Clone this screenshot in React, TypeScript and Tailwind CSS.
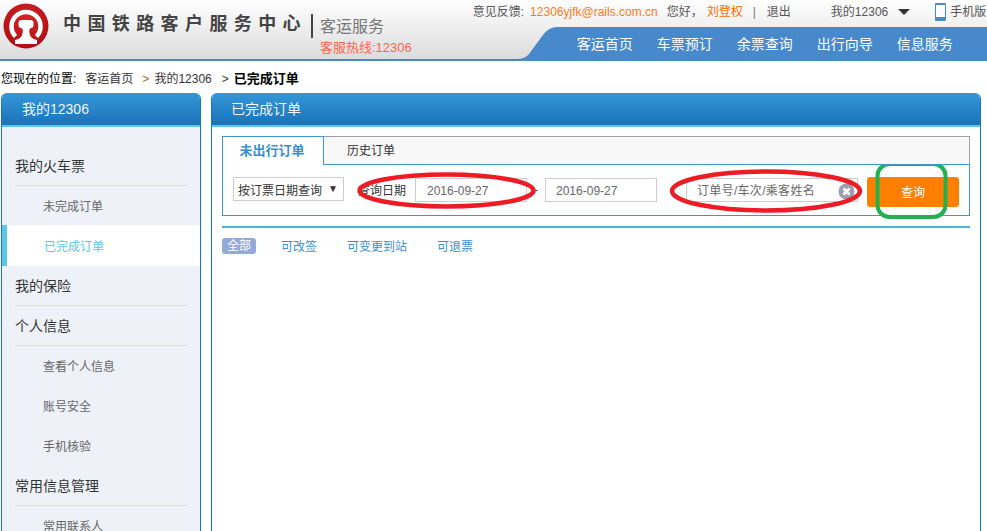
const FONT = "[font-family:'Liberation_Sans','Noto_Sans_CJK_SC',sans-serif]";

function Logo() {
  return (
    <svg width="46" height="46" viewBox="0 0 46 46" className="mt-[3px] ml-[3px] shrink-0">
      <defs>
        <radialGradient id="lg" cx="50%" cy="35%" r="70%">
          <stop offset="0%" stopColor="#d9252b" />
          <stop offset="100%" stopColor="#a80d12" />
        </radialGradient>
      </defs>
      <circle cx="23" cy="23" r="22.5" fill="url(#lg)" />
      <path d="M12.5 33.5 A14.5 14.5 0 1 1 33.5 33.5" fill="none" stroke="#fff" strokeWidth="4.5" />
      <path d="M15.5 20 Q15.5 17 18.5 17 H27.5 Q30.5 17 30.5 20 V22.5 Q30.5 24.5 28 25 Q26 25.5 26.2 28 Q26.5 33 29 35 Q31 36.5 34 37 V41 H12 V37 Q15 36.5 17 35 Q19.5 33 19.8 28 Q20 25.5 18 25 Q15.5 24.5 15.5 22.5 Z" fill="#fff" />
    </svg>
  );
}

function SideItem({ label, sub, active, short }: { label: string; sub?: boolean; active?: boolean; short?: boolean }) {
  if (active) {
    return (
      <div className="h-[41px] pt-[2px] bg-white border-l-[5px] border-[#5cc6ea] pl-[37px] flex items-center text-[12px] text-[#5cc6ea]">
        {label}
      </div>
    );
  }
  if (sub) {
    return (
      <div className={`${short ? "h-[39px] pt-[3px]" : "h-[40px] pt-[1px]"} pl-[41px] flex items-center text-[12px] text-[#666]`}>
        {label}
      </div>
    );
  }
  return (
    <div className="h-[40px] pt-[1px] ml-[13px] mr-[14px] border-b border-[#dddddd] flex items-center text-[14px] text-[#333]">
      {label}
    </div>
  );
}

function Field({ text, className }: { text: string; className: string }) {
  return (
    <div className={`h-[24px] pt-[2px] border border-[#cccccc] bg-white flex items-center text-[12px] text-[#666] ${className}`}>
      {text}
    </div>
  );
}

export default function App() {
  return (
    <div className={`relative w-[987px] h-[531px] overflow-hidden bg-white ${FONT}`}>
      <header className="h-[61px] flex bg-gradient-to-b from-white to-[#dcdcdc] border-b-2 border-[#4889cc]">
        <Logo />
        <div className="ml-[14px] mt-[11px] text-[18px] leading-[26px] font-bold tracking-[6.4px] text-[#444] whitespace-nowrap">
          中国铁路客户服务中心
        </div>
        <div className="ml-[4px] mt-[14px] w-[2px] h-[24px] bg-[#444]" />
        <div className="ml-[7px] mt-[16px] flex flex-col whitespace-nowrap">
          <span className="text-[16px] leading-[22px] text-[#777]">客运服务</span>
          <span className="mt-[2px] text-[13px] leading-[16px] text-[#ff6450]">客服热线:12306</span>
        </div>
        <div className="ml-[61px] flex-1 flex flex-col">
          <div className="h-[27px] pt-[3px] pb-[6px] flex items-center text-[12px] text-[#555] whitespace-nowrap">
            <span>意见反馈:</span>
            <span className="ml-[6px] text-[#ff7a1a]">12306yjfk@rails.com.cn</span>
            <span className="ml-[9px]">您好，</span>
            <span className="ml-[4px] text-[#ff6a00]">刘登权</span>
            <span className="ml-[10px] text-[#777]">|</span>
            <span className="ml-[11px]">退出</span>
            <span className="ml-[40px]">我的12306</span>
            <span className="ml-[10px] w-0 h-0 border-x-[6px] border-x-transparent border-t-[6px] border-t-[#333]" />
            <svg width="11" height="18" viewBox="0 0 11 18" className="ml-[25px]">
              <rect x="0.5" y="0.5" width="10" height="17" rx="1.5" fill="#fff" stroke="#4889cc" />
              <rect x="0" y="14" width="11" height="4" rx="1" fill="#4889cc" />
              <rect x="0" y="0" width="11" height="2" rx="1" fill="#4889cc" />
            </svg>
            <span className="ml-[4px]">手机版</span>
          </div>
          <div className="flex-1 flex ml-[44px]">
            <svg width="40" height="32" viewBox="0 0 40 32" className="shrink-0">
              <path d="M0 32 Q8 32 12 27 L26 8 Q32 0 40 0 V32 Z" fill="#4889cc" />
            </svg>
            <nav className="flex-1 bg-[#4889cc] flex items-center pl-[20px] pt-[3px] gap-[24px] text-[14px] text-white whitespace-nowrap">
              <span>客运首页</span>
              <span>车票预订</span>
              <span>余票查询</span>
              <span>出行向导</span>
              <span>信息服务</span>
            </nav>
          </div>
        </div>
      </header>

      <div className="h-[32px] pl-[1px] pt-[3px] flex items-center text-[12px] text-[#333] whitespace-nowrap">
        <span className="text-black">您现在的位置:</span>
        <span className="ml-[9px]">客运首页</span>
        <span className="ml-[9px] text-[#a06a10]">&gt;</span>
        <span className="ml-[5px]">我的12306</span>
        <span className="ml-[10px]">&gt;</span>
        <span className="ml-[5px] text-[13px] font-bold text-black">已完成订单</span>
      </div>

      <div className="flex pl-[1px] gap-[10px]">
        <aside className="w-[200px] h-[500px] shrink-0 rounded-t-[6px] border-x border-[#1a75bb] bg-[#eef1f8] overflow-hidden">
          <div className="h-[31px] pt-[1px] -mx-px bg-gradient-to-b from-[#3598d8] to-[#1a72b8] border-b-2 border-[#5ec5ec] box-content pl-[21px] flex items-center text-[14px] text-[#f0f6fb]">
            我的12306
          </div>
          <div className="pt-[19px]">
            <SideItem label="我的火车票" />
            <SideItem label="未完成订单" sub short />
            <SideItem label="已完成订单" active />
            <SideItem label="我的保险" />
            <SideItem label="个人信息" />
            <SideItem label="查看个人信息" sub />
            <SideItem label="账号安全" sub />
            <SideItem label="手机核验" sub />
            <SideItem label="常用信息管理" />
            <SideItem label="常用联系人" sub />
          </div>
        </aside>

        <main className="w-[770px] h-[500px] shrink-0 rounded-t-[6px] border-x border-[#1a75bb] bg-white overflow-hidden">
          <div className="h-[31px] pt-[1px] -mx-px bg-gradient-to-b from-[#3598d8] to-[#1a72b8] border-b-2 border-[#5ec5ec] box-content pl-[20px] flex items-center text-[14px] text-[#f0f6fb]">
            已完成订单
          </div>
          <div className="pl-[10px] pr-[10px] pt-[9px]">
            <div className="w-[748px]">
              <div className="relative z-10 flex h-[29px] text-[12px]">
                <div className="w-[102px] pr-[2px] bg-white border border-b-0 border-[#3a97d3] flex items-center justify-center text-[13px] font-bold text-[#3a8fd0]">
                  未出行订单
                </div>
                <div className="flex-1 bg-[#f8f8f8] border-t border-r border-b border-t-[#a0a0a0] border-r-[#a0a0a0] border-b-[#3a97d3] pl-[23px] flex items-center text-[#333]">
                  历史订单
                </div>
              </div>
              <div className="h-[52px] -mt-px border border-[#3a97d3] flex items-center">
                <div className="ml-[10px] -mt-[2px] w-[111px] h-[24px] pt-[3px] border border-[#cccccc] flex items-center pl-[4px] text-[12px] text-[#333]">
                  按订票日期查询
                  <span className="ml-[6px] -mt-[3px] text-[10px] leading-none">▼</span>
                </div>
                <span className="ml-[14px] pt-[2px] text-[12px] text-[#333]">查询日期</span>
                <Field text="2016-09-27" className="ml-[9px] w-[112px] pl-[11px]" />
                <span className="w-[18px] text-center text-[12px] text-[#333]">-</span>
                <Field text="2016-09-27" className="w-[112px] pl-[10px]" />
                <div className="relative ml-[29px] w-[172px]">
                  <Field text="订单号/车次/乘客姓名" className="w-[172px] pl-[10px] tracking-[0.3px]" />
                  <svg width="17" height="17" viewBox="0 0 17 17" className="absolute right-[3px] top-[5px]">
                    <circle cx="8.5" cy="8.5" r="8" fill="#9a9fae" />
                    <path d="M5.5 5.5 L11.5 11.5 M11.5 5.5 L5.5 11.5" stroke="#fff" strokeWidth="2.6" />
                  </svg>
                </div>
                <button className="ml-[9px] mt-[4px] pt-[2px] w-[92px] h-[30px] rounded-[3px] bg-[#ff8000] text-[12px] text-white">
                  查询
                </button>
              </div>
              <div className="mt-[10px] h-[2px] bg-[#4bb5e0]" />
              <div className="mt-[10px] h-[16px] flex items-center text-[12px] text-[#3a8fd0]">
                <span className="w-[34px] h-[16px] rounded-[3px] bg-[#93a9d8] text-white flex items-center justify-center">全部</span>
                <span className="ml-[25px] pt-[1px]">可改签</span>
                <span className="ml-[30px] pt-[1px]">可变更到站</span>
                <span className="ml-[30px] pt-[1px]">可退票</span>
              </div>
            </div>
          </div>
        </main>
      </div>

      <svg width="987" height="531" viewBox="0 0 987 531" className="absolute inset-0 pointer-events-none">
        <ellipse cx="446.5" cy="190.5" rx="87" ry="16" fill="none" stroke="#ed1c24" strokeWidth="4.5" />
        <ellipse cx="766" cy="191" rx="94" ry="19.5" fill="none" stroke="#ed1c24" strokeWidth="4.5" />
        <rect x="877.5" y="164" width="68" height="53" rx="12" fill="none" stroke="#22b14c" strokeWidth="4" />
      </svg>
    </div>
  );
}
